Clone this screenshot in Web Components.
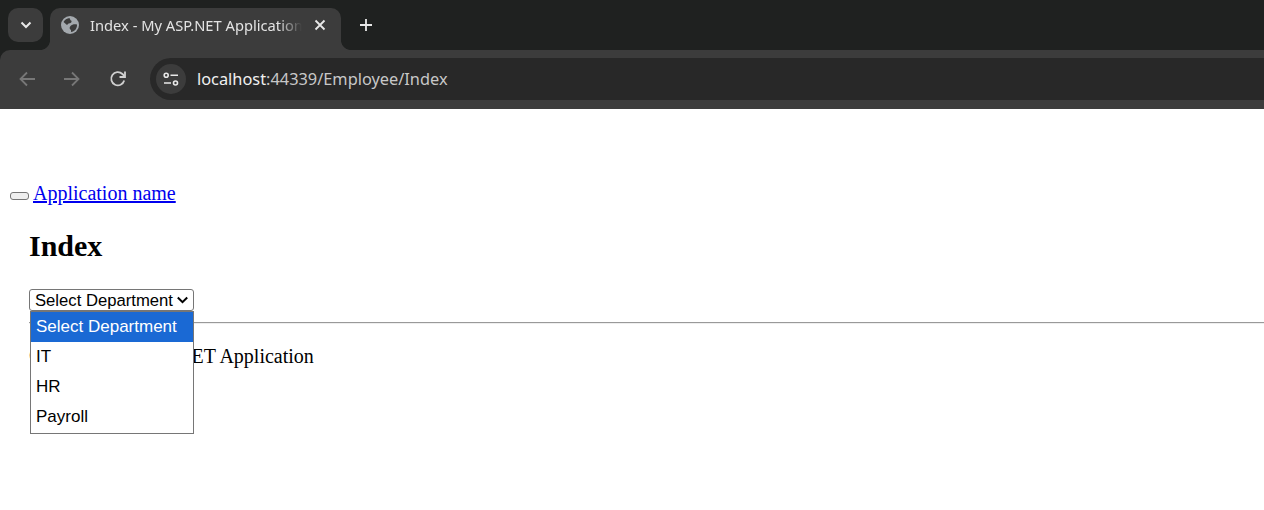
<!DOCTYPE html>
<html><head><meta charset="utf-8"><style>
html,body{margin:0;padding:0;background:#fff;height:510px;overflow:hidden}
</style></head><body>
<browser-chrome></browser-chrome>
<app-page></app-page>
<script>
class BrowserChrome extends HTMLElement{constructor(){super();this.attachShadow({mode:'open'}).innerHTML=`<style>
:host{display:block;font-family:"Noto Sans",sans-serif;color:#e8e8e8;background:#1f2120}
svg{display:block}
.strip{height:42px;padding:8px 0 0 8px;background:#1f2120;display:flex;align-items:flex-start}
.menu{width:35px;height:34px;background:#3c3c3c;border-radius:10px;display:flex;align-items:center;justify-content:center}
.tab{position:relative;margin-left:7px;width:291px;height:42px;background:#3c3c3c;border-radius:10px 10px 0 0;display:flex;align-items:center;padding:0 0 8px 11px;box-sizing:border-box}
.tab::before,.tab::after{content:"";position:absolute;bottom:0;width:10px;height:10px;background:radial-gradient(circle at 0 0,#1f2120 9.6px,#3c3c3c 10.4px)}
.tab::before{left:-10px}
.tab::after{right:-10px;transform:scaleX(-1)}
.title{margin-left:11px;width:214px;font-size:14.7px;white-space:nowrap;overflow:hidden;color:#e3e3e3;-webkit-mask-image:linear-gradient(90deg,#000 188px,transparent 212px);mask-image:linear-gradient(90deg,#000 188px,transparent 212px)}
.close{margin-left:10px}
.plus{margin-left:18px;margin-top:10px}
.bar{height:59px;background:#3c3c3c;display:flex;align-items:flex-start;padding-top:8px;box-sizing:border-box;border-radius:10px 0 0 0}
.nav{width:150px;height:42px;display:flex;align-items:center;padding-left:18px;box-sizing:border-box}
.nav svg:nth-child(2){margin-left:27px}
.nav svg:nth-child(3){margin-left:28px}
.omni{flex:1;height:42px;background:#282828;border-radius:21px 0 0 21px;display:flex;align-items:center;padding-left:6px}
.tune{width:30px;height:30px;border-radius:50%;background:#3c3c3c;display:flex;align-items:center;justify-content:center}
.url{margin-left:11px;font-size:16.35px;color:#c7c7c7;white-space:nowrap}
.url b{font-weight:400;color:#f0f0f0}
</style>
<div class="strip">
<div class="menu"><svg width="12" height="8" viewBox="0 0 12 8"><path d="M1.5 1.5 6 6l4.5-4.5" fill="none" stroke="#e8e8e8" stroke-width="2"/></svg></div>
<div class="tab">
<svg width="18" height="18" viewBox="0 0 18 18"><circle cx="9" cy="9" r="9" fill="#a4a9ae"/><path d="M8.5 2 C6 2.3 3.6 3.8 2.5 6 L6 9 7.5 7.5 C9.5 7.5 11 6.5 10.5 4.8 9.5 4.5 9 3.5 8.5 2Z M16 8.5 C13.5 7.8 11 8.5 9.5 10 8 11.5 8.5 13.2 10 14 L10 16 C13.5 15.7 16.3 12.5 16 8.5Z" fill="#3c3c3c"/></svg>
<div class="title">Index - My ASP.NET Application</div>
<div class="close"><svg width="12" height="12" viewBox="0 0 12 12"><path d="M1.5 1.5l9 9M10.5 1.5l-9 9" stroke="#e8e8e8" stroke-width="1.8"/></svg></div>
</div>
<div class="plus"><svg width="14" height="14" viewBox="0 0 14 14"><path d="M7 1v12M1 7h12" stroke="#e8e8e8" stroke-width="1.8"/></svg></div>
</div>
<div class="bar">
<div class="nav">
<svg width="18" height="16" viewBox="0 0 18 16"><path d="M17 8H2.5M9 1.5 2.5 8 9 14.5" fill="none" stroke="#777" stroke-width="1.8"/></svg>
<svg width="18" height="16" viewBox="0 0 18 16"><path d="M1 8h14.5M9 1.5 15.5 8 9 14.5" fill="none" stroke="#777" stroke-width="1.8"/></svg>
<svg width="18" height="18" viewBox="0 0 18 18"><path d="M15.2 10.5A6.6 6.6 0 1 1 13.4 4L15.5 6" fill="none" stroke="#d0d0d0" stroke-width="1.8"/><path d="M16 1.5V7h-5.5" fill="none" stroke="#d0d0d0" stroke-width="1.8"/></svg>
</div>
<div class="omni">
<div class="tune"><svg width="16" height="15" viewBox="0 0 16 15"><circle cx="3.2" cy="3.2" r="2" fill="none" stroke="#e8e8e8" stroke-width="1.6"/><path d="M7.5 3.2H15M1 11h7" stroke="#e8e8e8" stroke-width="1.6"/><circle cx="12.5" cy="11" r="2" fill="none" stroke="#e8e8e8" stroke-width="1.6"/></svg></div>
<div class="url"><b>localhost</b>:44339/Employee/Index</div>
</div>
</div>`}}
customElements.define('browser-chrome',BrowserChrome);

class DeptDropdown extends HTMLElement{constructor(){super();this.attachShadow({mode:'open'}).innerHTML=`<style>
:host{display:block;position:relative;width:165px;height:22px;font-family:"Liberation Sans",sans-serif;color:#000}
.box{box-sizing:border-box;width:165px;height:22px;border:1px solid #767676;border-radius:3px;background:#fff;font-size:16.67px;line-height:20px;padding:1px 5px 0 5px;display:flex;align-items:center;justify-content:space-between;white-space:nowrap}
.box svg{margin-top:-1px}
.pop{position:absolute;left:1px;top:22px;width:164px;height:123px;box-sizing:border-box;border:1px solid #767676;background:#fff;font-size:17px;z-index:5}
.opt{height:30px;line-height:30px;padding-left:5px}
.opt.sel{background:#1a69d4;color:#fff}
</style>
<div class="box"><span>Select Department</span><svg width="11" height="8" viewBox="0 0 11 8"><path d="M.8 1.5 5.5 6.2 10.2 1.5" fill="none" stroke="#000" stroke-width="2"/></svg></div>
<div class="pop"><div class="opt sel">Select Department</div><div class="opt">IT</div><div class="opt">HR</div><div class="opt">Payroll</div></div>`}}
customElements.define('dept-dropdown',DeptDropdown);

class AppPage extends HTMLElement{constructor(){super();this.attachShadow({mode:'open'}).innerHTML=`<style>
:host{display:block;font-family:"Liberation Serif",serif;font-size:20px;color:#000;background:#fff}
.nav{padding:73px 0 0 10px;height:23px;display:flex;align-items:center}
button{width:19px;height:8px;padding:0;margin:5px 4px 0 0;border:1.5px solid #767676;border-radius:3px;background:#efefef;box-sizing:border-box}
a{color:#00e;text-decoration:underline}
main{padding:0 0 0 29px}
h2{font-size:30px;line-height:34px;margin:24px 0 26px;font-weight:700}
hr{margin:11px 0 0 0;border:0;border-top:1px solid #999;border-bottom:1px solid #eee;height:0}
p{margin:21px 0 0;line-height:23px}
</style>
<div class="nav"><button></button><a href="#">Application name</a></div>
<main>
<h2>Index</h2>
<dept-dropdown></dept-dropdown>
<hr>
<p>© 2024 - My ASP.NET Application</p>
</main>`}}
customElements.define('app-page',AppPage);
</script>
</body></html>
